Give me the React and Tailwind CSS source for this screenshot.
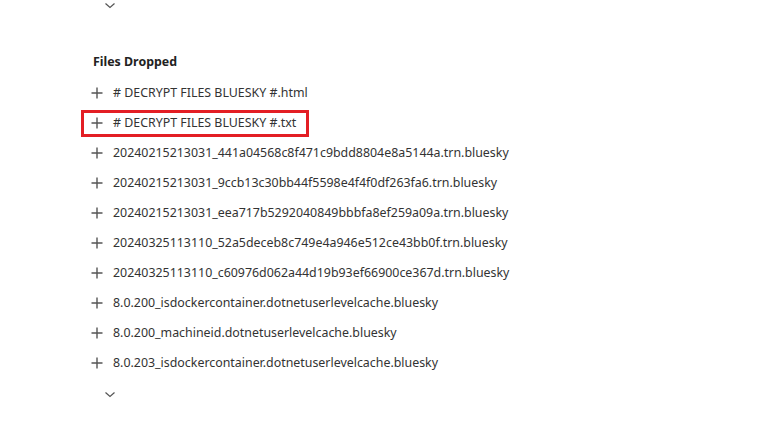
import React from 'react'

const files = [
    '# DECRYPT FILES BLUESKY #.html',
    '# DECRYPT FILES BLUESKY #.txt',
    '20240215213031_441a04568c8f471c9bdd8804e8a5144a.trn.bluesky',
    '20240215213031_9ccb13c30bb44f5598e4f4f0df263fa6.trn.bluesky',
    '20240215213031_eea717b5292040849bbbfa8ef259a09a.trn.bluesky',
    '20240325113110_52a5deceb8c749e4a946e512ce43bb0f.trn.bluesky',
    '20240325113110_c60976d062a44d19b93ef66900ce367d.trn.bluesky',
    '8.0.200_isdockercontainer.dotnetuserlevelcache.bluesky',
    '8.0.200_machineid.dotnetuserlevelcache.bluesky',
    '8.0.203_isdockercontainer.dotnetuserlevelcache.bluesky',
]

function Plus() {
    return (
        <svg width="12" height="12" viewBox="0 0 12 12" className="shrink-0">
            <path d="M6 0.5v11M0.5 6h11" stroke="#555" strokeWidth="1.4" fill="none" />
        </svg>
    )
}

function Chevron() {
    return (
        <svg width="12" height="7" viewBox="0 0 12 7">
            <path d="M1.5 1.5l4.5 4 4.5-4" stroke="#555" strokeWidth="1.2" fill="none" />
        </svg>
    )
}

function Row({ name, highlighted }) {
    if (highlighted) {
        return (
            <div className="flex items-center h-[30px]">
                <div className="flex items-center gap-[10px] h-[27px] w-fit ml-[-10px] border-[3px] border-[#e31e24] pl-[7px] pr-[10px]">
                    <Plus />
                    <span>{name}</span>
                </div>
            </div>
        )
    }
    return (
        <div className="flex items-center gap-[10px] h-[30px]">
            <Plus />
            <span>{name}</span>
        </div>
    )
}

export default function App() {
    return (
        <div
            className="w-[766px] h-[439px] bg-white overflow-hidden text-[12.4px] leading-[20px] text-[#333]"
            style={{ fontFamily: '"Noto Sans", sans-serif' }}
        >
            <div className="pl-[104px] pt-[2px] h-[11px] flex">
                <Chevron />
            </div>
            <div className="pl-[93px] pt-[41px] h-[67px] font-bold text-[12.4px] text-[#222]">Files Dropped</div>
            <div className="pl-[91px] flex flex-col">
                {files.map((f, i) => (
                    <Row key={f} name={f} highlighted={i === 1} />
                ))}
            </div>
            <div className="pl-[104px] pt-[13px] flex">
                <Chevron />
            </div>
        </div>
    )
}
